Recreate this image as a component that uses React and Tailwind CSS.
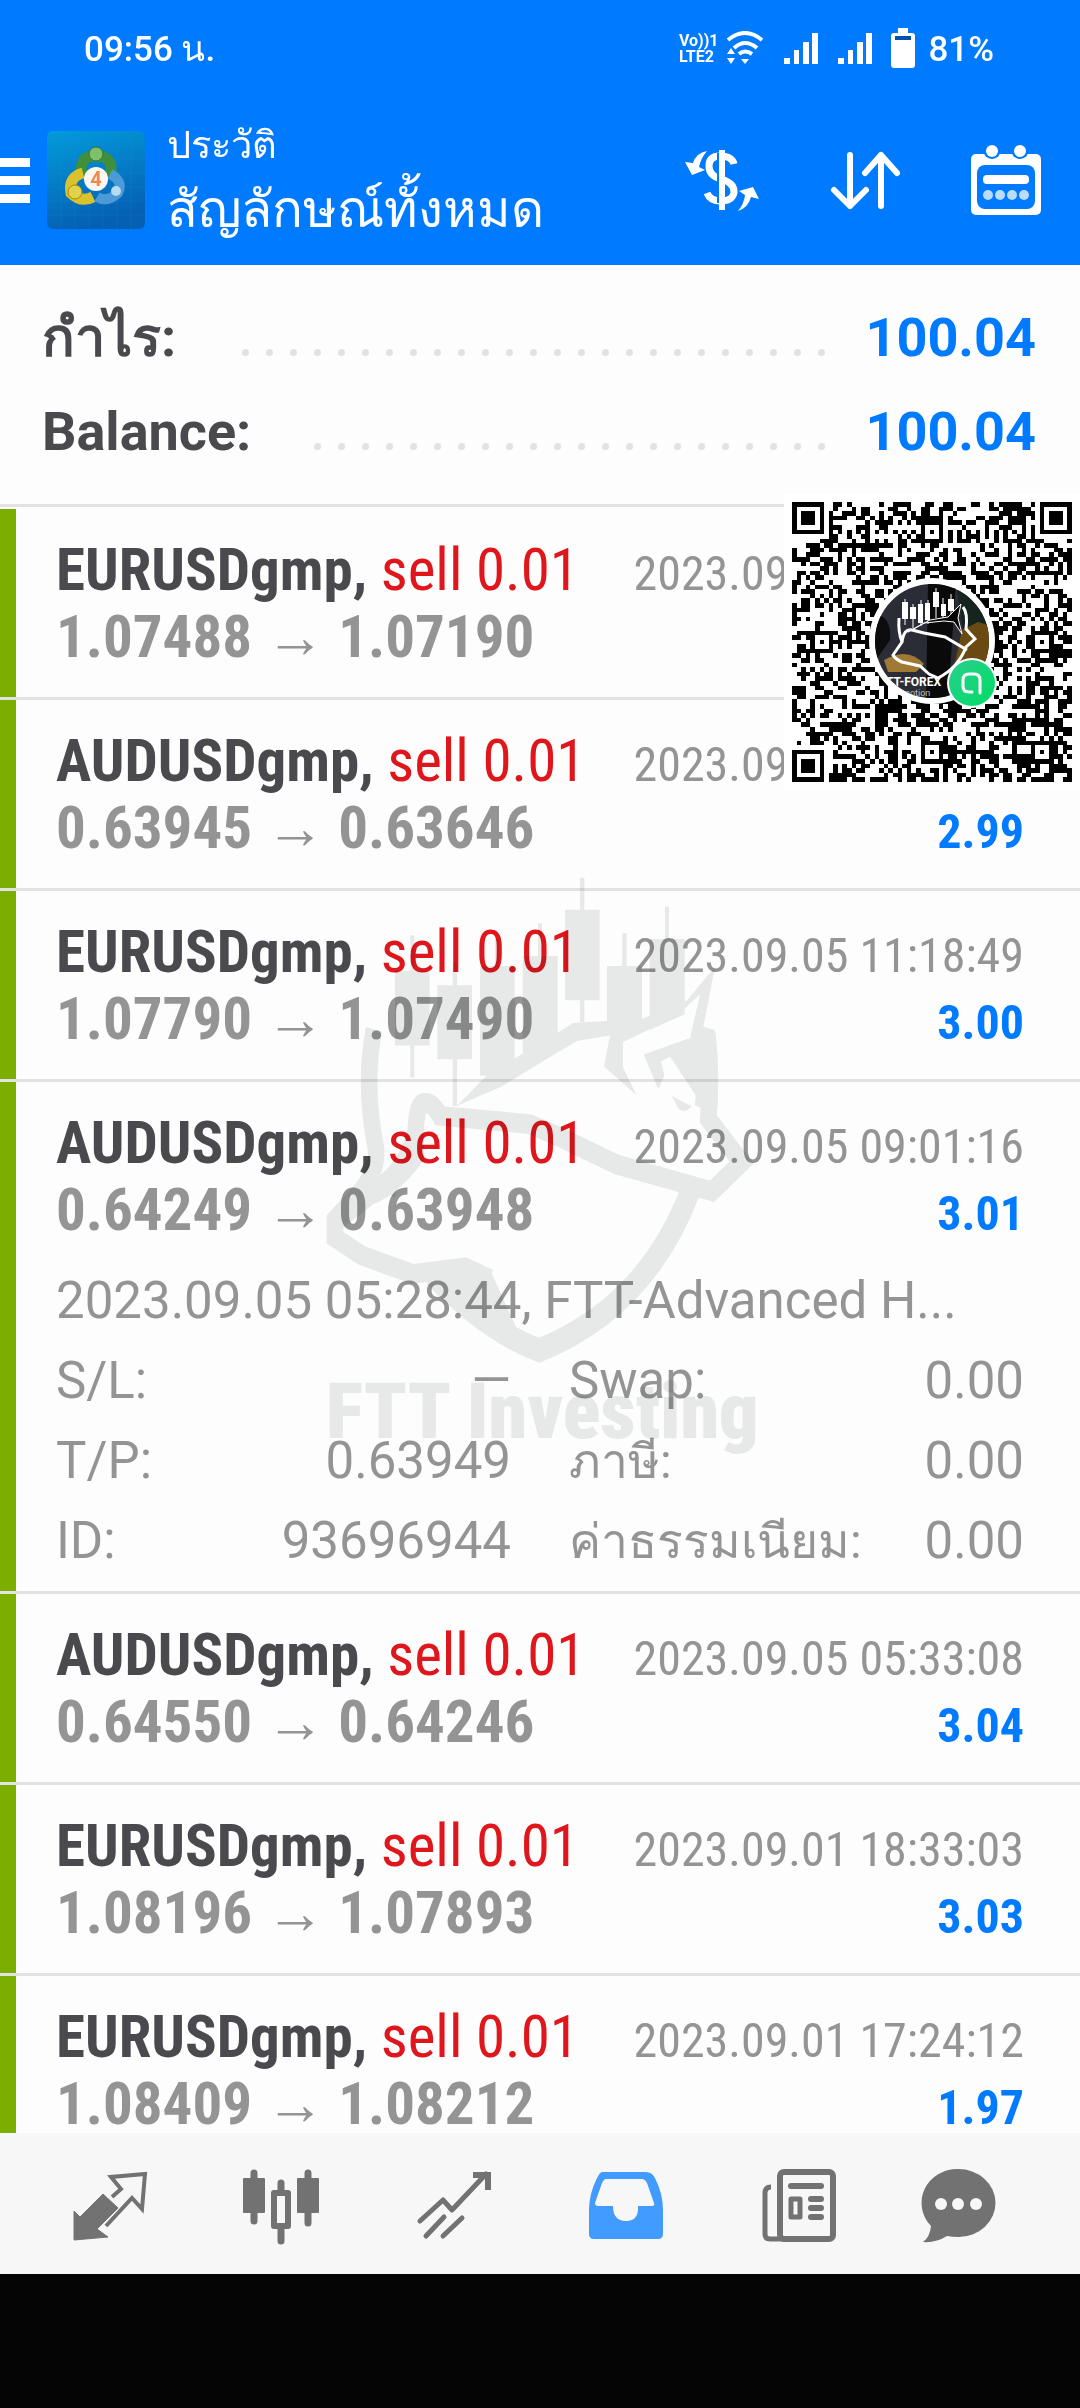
import clsx from "clsx";

const trades = [
    { symbol: "EURUSDgmp", side: "sell 0.01", open: "1.07488", close: "1.07190", time: "2023.09.05 14:22:07", profit: "2.98" },
    { symbol: "AUDUSDgmp", side: "sell 0.01", open: "0.63945", close: "0.63646", time: "2023.09.05 12:40:31", profit: "2.99" },
    { symbol: "EURUSDgmp", side: "sell 0.01", open: "1.07790", close: "1.07490", time: "2023.09.05 11:18:49", profit: "3.00" },
    {
        symbol: "AUDUSDgmp",
        side: "sell 0.01",
        open: "0.64249",
        close: "0.63948",
        time: "2023.09.05 09:01:16",
        profit: "3.01",
        details: {
            comment: "2023.09.05 05:28:44, FTT-Advanced H...",
            left: [["S/L:", "—"], ["T/P:", "0.63949"], ["ID:", "93696944"]],
            right: [["Swap:", "0.00"], ["ภาษี:", "0.00"], ["ค่าธรรมเนียม:", "0.00"]],
        },
    },
    { symbol: "AUDUSDgmp", side: "sell 0.01", open: "0.64550", close: "0.64246", time: "2023.09.05 05:33:08", profit: "3.04" },
    { symbol: "EURUSDgmp", side: "sell 0.01", open: "1.08196", close: "1.07893", time: "2023.09.01 18:33:03", profit: "3.03" },
    { symbol: "EURUSDgmp", side: "sell 0.01", open: "1.08409", close: "1.08212", time: "2023.09.01 17:24:12", profit: "1.97" },
];

const StatusBar = () => (
    <div className="flex h-[98px] items-center justify-between pl-[84px] pr-[86px] text-[35px] leading-none font-medium">
        <span>09:56 น.</span>
        <div className="flex items-center">
            <div className="flex flex-col text-[16px] leading-[16px] font-bold">
                <span className="whitespace-nowrap">Vo))1</span>
                <span>LTE2</span>
            </div>
            <svg className="ml-2 h-[36px] w-[38px]" viewBox="0 0 38 36" fill="none" stroke="currentColor" strokeWidth="4">
                <path d="M2 9Q19 -5 36 9M8 17Q19 7 31 17M13 23Q19 18 26 23" />
                <path d="M15 28h8l-4 5zM1 23l4-6 4 6zM1 27h8l-4 6z" fill="currentColor" stroke="none" />
            </svg>
            {[0, 1].map((i) => (
                <svg key={i} className="ml-5 h-[32px] w-[34px]" viewBox="0 0 34 32" fill="currentColor">
                    <path d="M0 25h6v6H0zM10 17h5v14h-5zM19 9h6v22h-6zM28 0h6v31h-6z" />
                </svg>
            ))}
            <svg className="ml-[18px] h-[42px] w-[26px]" viewBox="0 0 26 42">
                <path d="M8 0h10v5h4q3 0 3 3v29q0 3-3 3H4q-3 0-3-3V8q0-3 3-3h4z" fill="#fff" />
                <path d="M5 8h16v4H5z" fill="#0a4fb0" />
            </svg>
            <span className="ml-3">81%</span>
        </div>
    </div>
);

const AppLogo = () => (
    <svg className="h-[98px] w-[98px] shrink-0" viewBox="0 0 98 98">
        <defs>
            <linearGradient id="logoBg" x1="0" y1="0" x2="0.3" y2="1">
                <stop offset="0" stopColor="#039bdc" />
                <stop offset="1" stopColor="#0560b4" />
            </linearGradient>
        </defs>
        <rect width="98" height="98" rx="6" fill="url(#logoBg)" />
        <path d="M0 14h98M0 28h98M0 42h98M0 56h98M0 70h98M0 84h98M14 0v98M28 0v98M42 0v98M56 0v98M70 0v98M84 0v98" stroke="#1aa2dd" strokeOpacity="0.15" />
        <path d="M35 46Q31 24 49 25Q68 25 63 46" fill="none" stroke="#3f8f3d" strokeWidth="11" />
        <path d="M36 42Q21 46 24 62Q34 72 46 66" fill="none" stroke="#d9c32c" strokeWidth="11" />
        <path d="M63 43Q77 50 71 62Q60 72 50 66" fill="none" stroke="#4c9bd6" strokeWidth="10" />
        <circle cx="49" cy="23" r="7" fill="#7fc06a" stroke="#35782f" />
        <circle cx="28" cy="61" r="7" fill="#e5d04a" stroke="#a08a12" />
        <circle cx="69" cy="60" r="5" fill="#b5dcf3" />
        <circle cx="49" cy="48" r="12" fill="#fdf9f2" />
        <text x="49" y="55" textAnchor="middle" fontSize="20" fontWeight="700" fill="#ee8b4a">4</text>
    </svg>
);

const Header = () => (
    <header className="h-[265px] shrink-0 bg-[#007aff] text-white">
        <StatusBar />
        <div className="flex h-[164px] items-center">
            <button aria-label="Menu" className="flex h-24 w-[47px] flex-col justify-center gap-[9px]">
                <i className="h-[9px] w-[30px] bg-white" />
                <i className="h-[9px] w-[30px] bg-white" />
                <i className="h-[9px] w-[30px] bg-white" />
            </button>
            <AppLogo />
            <div className="ml-[22px] flex flex-1 flex-col whitespace-nowrap">
                <span className="text-[38px] leading-[60px]">ประวัติ</span>
                <h1 className="text-[51px] leading-[70px]">สัญลักษณ์ทั้งหมด</h1>
            </div>
            <div className="flex items-center pr-[38px]">
                <button aria-label="Deposits and withdrawals">
                    <svg className="h-[72px] w-[74px]" viewBox="0 0 74 72">
                        <path d="M49 20Q47 12 35 12Q24 12 24 22Q24 32 36 35Q50 39 49 49Q47 57 36 57Q25 57 22 49" fill="none" stroke="#fff" strokeWidth="7" />
                        <path d="M33 9v50" stroke="#007aff" strokeWidth="2" />
                        <path d="M37 6v60" stroke="#fff" strokeWidth="6" />
                        <path d="M22 7Q11 9 8 19L0 18L7 31L20 26L14 23Q16 14 22 7z" fill="#fff" />
                        <path d="M53 67Q63 64 66 53L74 55L68 43L54 47L60 51Q59 60 53 67z" fill="#fff" />
                    </svg>
                </button>
                <button aria-label="Sort" className="ml-[71px]">
                    <svg className="h-[60px] w-[70px]" viewBox="0 0 70 60" fill="none" stroke="#fff" strokeWidth="6" strokeLinecap="round" strokeLinejoin="round">
                        <path d="M20 5v51M4 40l16 16 16-16M51 56V5M35 23L51 5l16 18" />
                    </svg>
                </button>
                <button aria-label="Period" className="ml-[70px]">
                    <svg className="h-[72px] w-[72px]" viewBox="0 0 72 72">
                        <rect x="1" y="10" width="70" height="61" rx="5" fill="#fff" />
                        <rect x="7" y="21" width="58" height="44" rx="8" fill="#007aff" />
                        <circle cx="22" cy="6" r="9" fill="#007aff" />
                        <circle cx="50" cy="6" r="9" fill="#007aff" />
                        <circle cx="22" cy="7" r="6" fill="#fff" />
                        <circle cx="50" cy="7" r="6" fill="#fff" />
                        <rect x="13" y="31" width="46" height="9" rx="4" fill="#fff" />
                        <g fill="#b9dcff">
                            <circle cx="18" cy="51" r="5" />
                            <circle cx="30" cy="51" r="5" />
                            <circle cx="42" cy="51" r="5" />
                            <circle cx="54" cy="51" r="5" />
                        </g>
                    </svg>
                </button>
            </div>
        </div>
    </header>
);

const SummaryRow = ({ label, value, dots }) => (
    <div className="flex h-[94px] items-center justify-between pr-[44px] pl-[42px] text-[54px] font-bold">
        <dt className="text-[#4a494d]">{label}</dt>
        <dd className="flex items-center text-[#007aff]">
            <span className={clsx("mr-10 flex justify-between pt-[30px]", dots === 25 ? "w-[583px]" : "w-[511px]")}>
                {Array.from({ length: dots }, (_, i) => (
                    <i key={i} className="h-[7px] w-[7px] rounded-full bg-[#e2e2e2]" />
                ))}
            </span>
            {value}
        </dd>
    </div>
);

const Details = ({ details }) => (
    <div className="pt-[18px] text-[51px] leading-[80px] text-[#949494]">
        <p className="whitespace-nowrap">{details.comment}</p>
        <div className="grid grid-cols-[455px_1fr] gap-x-[58px]">
            {[details.left, details.right].map((column, i) => (
                <dl key={i}>
                    {column.map(([label, value]) => (
                        <div key={label} className="flex h-[80px] items-baseline justify-between whitespace-nowrap">
                            <dt className={clsx(/[ก-๙]/.test(label) && "text-[48px]")}>{label}</dt>
                            <dd>{value}</dd>
                        </div>
                    ))}
                </dl>
            ))}
        </div>
    </div>
);

const TradeRow = ({ trade }) => (
    <li className={clsx("border-t-3 border-[#e2e2e2] first:h-[193px] first:pt-0.5", trade.details ? "h-[512px]" : "h-[191px]")}>
        <div className="h-full border-l-16 border-[#7aae00] pt-[27px] pr-[56px] pl-[40px]">
            <div className="font-['Roboto_Condensed','Roboto',sans-serif]">
                <div className="flex h-[68px] items-baseline justify-between whitespace-nowrap">
                    <span className="text-[59px] leading-[68px]">
                        <b className="text-[#4a494d]">{trade.symbol},</b> <span className="text-[#e0161d]">{trade.side}</span>
                    </span>
                    <time className="text-[48px] text-[#949494]">{trade.time}</time>
                </div>
                <div className="flex h-[66px] items-baseline justify-between font-bold">
                    <span className="text-[59px] leading-[66px] text-[#949494]">
                        {trade.open} → {trade.close}
                    </span>
                    <span className="text-[48px] text-[#007aff]">{trade.profit}</span>
                </div>
            </div>
            {trade.details && <Details details={trade.details} />}
        </div>
    </li>
);

const QR_SIZE = 61;

const ringOf = (x, y, cx, cy) => Math.max(Math.abs(x - cx), Math.abs(y - cy));

const qrModule = (x, y) => {
    for (const [cx, cy] of [[3, 3], [57, 3], [3, 57]]) {
        const d = ringOf(x, y, cx, cy);
        if (d <= 4) return d !== 2 && d !== 4;
    }
    for (const [cx, cy] of [[30, 6], [6, 30], [54, 30], [30, 54], [54, 54]]) {
        const d = ringOf(x, y, cx, cy);
        if (d <= 2) return d !== 1;
    }
    if (x === 6 || y === 6) return (x + y) % 2 === 0;
    let n = Math.imul(x * 73 + 11, 374761393) ^ Math.imul(y * 57 + 7, 668265263);
    n = Math.imul(n ^ (n >>> 13), 1274126177);
    return ((n ^ (n >>> 16)) & 1) === 1;
};

let qrPath = "";
for (let y = 0; y < QR_SIZE; y++) {
    for (let x = 0; x < QR_SIZE; x++) {
        if (qrModule(x, y)) qrPath += `M${x} ${y}h1v1h-1z`;
    }
}

const QrCode = () => (
    <div className="absolute top-[494px] right-0 bg-white p-2">
        <svg className="h-[280px] w-[280px]" viewBox="0 0 280 280" role="img" aria-label="QR code">
            <defs>
                <clipPath id="avatar">
                    <circle cx="140" cy="139" r="57" />
                </clipPath>
                <linearGradient id="badge" x1="0" y1="0" x2="1" y2="1">
                    <stop offset="0" stopColor="#2bcf8f" />
                    <stop offset="1" stopColor="#00dc64" />
                </linearGradient>
            </defs>
            <path d={qrPath} transform="scale(4.59)" shapeRendering="crispEdges" />
            <circle cx="140" cy="139" r="63" fill="#fff" />
            <g clipPath="url(#avatar)">
                <rect x="80" y="80" width="120" height="120" fill="#2b2d36" />
                <path d="M136 80h28l-8 120h-22z" fill="#0b0a0a" />
                <path d="M164 80h40v50l-32 4z" fill="#15241f" />
                <path d="M170 128l16-8 14 4v50h-40z" fill="#6b4a12" />
                <path d="M80 112q20 0 18 26l-14 20z" fill="#0d0c0e" />
                <path d="M92 158q24-14 40 4l-8 8H96z" fill="#a07a35" />
                <g stroke="#fff" fill="#fff">
                    <path d="M113 97v26M121 102v24M129 98v26M136 98v24M144 86v30M151 96v20M159 92v20" strokeWidth="1" />
                    <path d="M110 100h6v17h-6zM118 105h6v12h-6zM126 102h5v19h-5zM133 101h5v17h-5zM141 90h6v15h-6zM149 102h5v12h-5zM156 97h6v12h-6z" stroke="none" />
                    <path d="M107 116q-1 14 3 24l-9 13q2 4 9 7l18 4 9 8 9 4q20-10 28-31l9-8-9-10q2-16-3-22M110 140q2-14 10-12l12 3 21 4 22 13" fill="none" strokeWidth="3" />
                    <path d="M116 130l22-12 18-3 13-13-3 14 4 16-8-12-10-1-20 2z" fill="#050505" strokeWidth="1" />
                </g>
                <text x="94" y="184" fontSize="12" fontWeight="700" fill="#fff">TT-FOREX</text>
                <text x="110" y="194" fontSize="9" fill="#bdbdbd">motion</text>
            </g>
            <circle cx="180" cy="181" r="25" fill="#fff" />
            <circle cx="180" cy="181" r="23" fill="url(#badge)" />
            <path d="M188 191V178q0-6-6-6h-5q-6 0-6 6v6q0 6 6 6h3" fill="none" stroke="#fff" strokeWidth="3" strokeLinecap="round" strokeLinejoin="round" />
        </svg>
    </div>
);

const Watermark = () => (
    <div className="pointer-events-none absolute top-[860px] left-1/2 -translate-x-1/2 mix-blend-multiply">
        <svg className="h-[620px] w-[480px]" viewBox="0 0 1440 1568" preserveAspectRatio="none" fill="#e9ebea">
            <path d="M840 45h13v365h-13zM795 126h104v229H795zM714 160h12v200h-12zM668 243h105v210l-105 50zM967 185h13v170h-13zM921 268h105v150H921zM1095 118h12v200h-12zM1049 200h105v190l-105 40zM585 200h12v220h-12zM540 268h104v277H540zM458 260h13v362h-13zM412 317h104v187H412zM331 190h12v360h-12zM285 280h104v189H285z" />
            <path d="M470 622L560 545L820 412L920 407L1020 404L1160 356L1245 270L1210 422L1243 430Q1262 530 1250 645L1185 620L1187 595L1110 497L1083 510L1093 545L1075 580L1031 492L1170 450L1200 340L1125 398L969 460V525L1010 595L912 522L930 444L830 458L600 575z" />
            <path d="M1115 597l60 26q-22 22-40 5z" />
            <path d="M245 828l60-24-22 50z" />
            <path d="M415 1055l100-25 60 15 75 140-70-25z" />
            <g fill="none" stroke="#e9ebea" strokeWidth="50">
                <path d="M222 428Q190 570 228 730Q235 790 170 850L105 910V955L185 1000L338 1047L495 1030L570 1060" />
                <path d="M348 760Q340 610 375 615Q395 610 420 647L690 668L790 705L950 770L1236 838L1325 765L1225 655Q1235 540 1222 440" />
                <path d="M400 1050Q560 1190 718 1240Q1040 1130 1172 835" strokeWidth="60" />
            </g>
            <path d="M322 680L372 690L372 760Q290 850 220 870L130 930L110 900L235 800Q300 760 322 680z" />
        </svg>
        <span className="absolute top-[504px] left-[26px] font-['Roboto_Condensed','Roboto',sans-serif] text-[78px] leading-[96px] font-black whitespace-nowrap text-[#e9ebea]">FTT Investing</span>
    </div>
);

const tabs = [
    {
        name: "Quotes",
        icon: (
            <>
                <path d="M53 32l15 14-21 21 11 8-34 3V49l6 6z" fill="currentColor" stroke="currentColor" strokeLinejoin="round" />
                <path d="M62 35l9-8-10-12 34-3-3 35-10-11-26 28" strokeWidth="4" />
            </>
        ),
    },
    {
        name: "Charts",
        icon: (
            <>
                <path d="M32 11v48M86 11v50M59 21v58" strokeWidth="7" strokeLinecap="round" />
                <path d="M22 17h20v33H22zM76 17h20v33H76z" fill="currentColor" strokeWidth="2" strokeLinejoin="round" />
                <path d="M52 31h14v33H52z" fill="#f7f7f7" strokeWidth="6" strokeLinejoin="round" />
            </>
        ),
    },
    {
        name: "Trade",
        icon: (
            <>
                <path d="M26 59l23-21 9 10 34-36M32 74l18-19M49 74l19-18" strokeWidth="5" strokeLinecap="round" strokeLinejoin="round" />
                <path d="M79 13h15v15" strokeWidth="6" />
            </>
        ),
    },
    {
        name: "History",
        active: true,
        icon: (
            <path
                d="M36 10h44q6 0 9 6q8 16 8 32v24q0 5-5 5H28q-5 0-5-5V48q0-16 8-32q3-6 5-6zM40 17q-2 0-4 4l-7 20q0 3 3 3h15q0 15 13 15t12-15h14q3 0 2-3l-7-20q-2-4-5-4z"
                fill="currentColor"
                fillRule="evenodd"
                stroke="none"
            />
        ),
    },
    {
        name: "News",
        icon: (
            <>
                <rect x="42" y="10" width="53" height="67" rx="4" strokeWidth="6" />
                <path d="M33 25q-6 0-6 6v41q0 5 5 5h14" strokeWidth="5" />
                <path d="M53 24h30M73 37h10M73 46h10M73 55h10" strokeWidth="6" strokeLinecap="round" />
                <rect x="53" y="37" width="9" height="18" strokeWidth="5" strokeLinejoin="round" />
            </>
        ),
    },
    {
        name: "Messages",
        icon: (
            <>
                <path d="M48 7a37 34 0 0 1 1 68q-7 0-12-1q-11 7-24 6q7-5 8-16A36 34 0 0 1 48 7z" fill="currentColor" stroke="none" />
                <g fill="#f7f7f7" stroke="none">
                    <circle cx="31" cy="42" r="6" />
                    <circle cx="48" cy="42" r="6" />
                    <circle cx="66" cy="42" r="6" />
                </g>
            </>
        ),
    },
];

const BottomNav = () => (
    <nav className="flex h-[141px] shrink-0 items-center bg-[#f7f7f7] px-6">
        {tabs.map((tab) => (
            <button key={tab.name} aria-label={tab.name} className={clsx("flex flex-1 justify-center", tab.active ? "text-[#429bff]" : "text-[#727272]")}>
                <svg className="h-[84px] w-[120px]" viewBox="0 0 120 84" fill="none" stroke="currentColor">
                    {tab.icon}
                </svg>
            </button>
        ))}
    </nav>
);

const App = () => {
    return (
        <div className="relative flex h-screen flex-col overflow-hidden bg-[#fdfdfd] font-['Roboto','Noto_Sans',sans-serif]">
            <Header />
            <main className="min-h-0 flex-1 overflow-y-auto [scrollbar-width:none]">
                <dl className="h-[239px] pt-[25px]">
                    <SummaryRow label="กำไร:" value="100.04" dots={25} />
                    <SummaryRow label="Balance:" value="100.04" dots={22} />
                </dl>
                <ul>
                    {trades.map((trade) => (
                        <TradeRow key={trade.time} trade={trade} />
                    ))}
                </ul>
            </main>
            <BottomNav />
            <div className="h-[134px] shrink-0 bg-[#050505]" />
            <Watermark />
            <QrCode />
        </div>
    );
};

export default App;
